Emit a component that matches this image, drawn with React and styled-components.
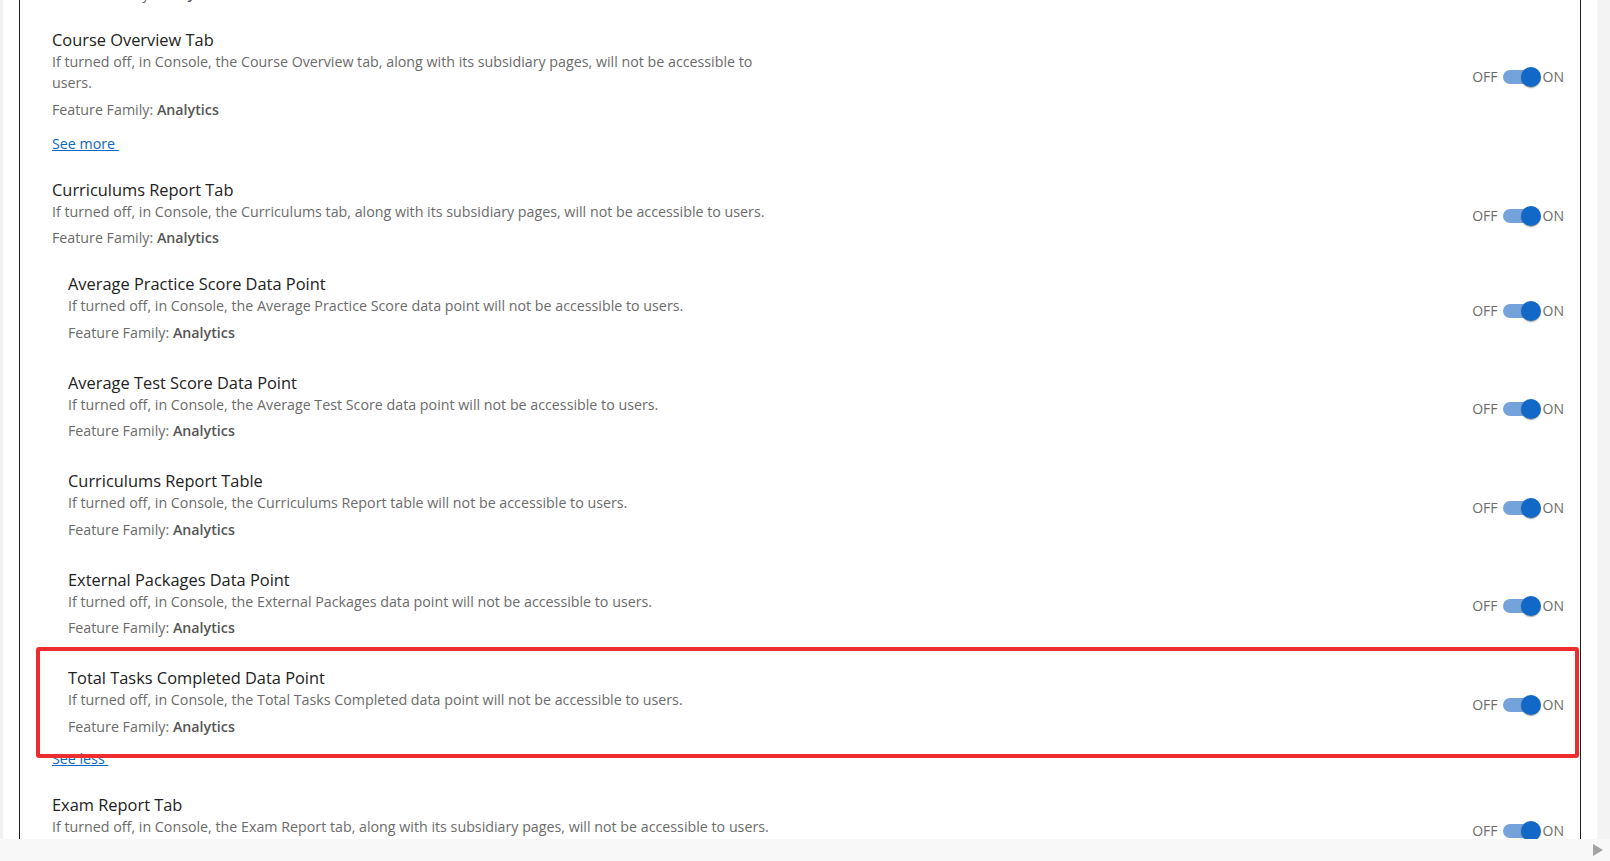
import React from "react";
import styled, { createGlobalStyle } from "styled-components";

const GlobalStyle = createGlobalStyle`
    html, body {
        margin: 0;
        padding: 0;
        background: #ffffff;
        overflow: hidden;
    }
    body {
        font-family: "Open Sans", "Noto Sans", "Liberation Sans", sans-serif;
        color: #222;
    }
`;

const subFeatures = [
    {
        title: "Average Practice Score Data Point",
        desc: "If turned off, in Console, the Average Practice Score data point will not be accessible to users.",
    },
    {
        title: "Average Test Score Data Point",
        desc: "If turned off, in Console, the Average Test Score data point will not be accessible to users.",
    },
    {
        title: "Curriculums Report Table",
        desc: "If turned off, in Console, the Curriculums Report table will not be accessible to users.",
    },
    {
        title: "External Packages Data Point",
        desc: "If turned off, in Console, the External Packages data point will not be accessible to users.",
    },
    {
        title: "Total Tasks Completed Data Point",
        desc: "If turned off, in Console, the Total Tasks Completed data point will not be accessible to users.",
        highlighted: true,
    },
];

export default function App() {
    return (
        <>
            <GlobalStyle />
            <Screen>
                <Viewport>
                    <Gutter />
                    <Panel>
                        <List>
                            <FeatureRow
                                $tail
                                title="Course Catalog Tab"
                                desc="If turned off, in Console, the Course Catalog tab will not be accessible to users."
                            />
                            <FeatureRow
                                title="Course Overview Tab"
                                desc="If turned off, in Console, the Course Overview tab, along with its subsidiary pages, will not be accessible to users."
                            />
                            <SeeLink href="#">See more&nbsp;</SeeLink>

                            <FeatureRow
                                title="Curriculums Report Tab"
                                desc="If turned off, in Console, the Curriculums tab, along with its subsidiary pages, will not be accessible to users."
                            />
                            <SubList>
                                {subFeatures.map((f) => (
                                    <FeatureRow
                                        key={f.title}
                                        $sub
                                        title={f.title}
                                        desc={f.desc}
                                        highlighted={f.highlighted}
                                    />
                                ))}
                            </SubList>
                            <SeeLink href="#">See less&nbsp;</SeeLink>

                            <FeatureRow
                                title="Exam Report Tab"
                                desc="If turned off, in Console, the Exam Report tab, along with its subsidiary pages, will not be accessible to users."
                            />
                        </List>
                    </Panel>
                </Viewport>
                <VScroll />
                <HScroll>
                    <ScrollArrow />
                </HScroll>
            </Screen>
        </>
    );
}

function FeatureRow({ title, desc, $sub, $tail, highlighted }) {
    return (
        <Row $sub={$sub} $tail={$tail}>
            <Info>
                <Title>{title}</Title>
                <Desc>{desc}</Desc>
                <Family>
                    Feature Family: <strong>Analytics</strong>
                </Family>
            </Info>
            <Toggle />
            {highlighted && <Highlight />}
        </Row>
    );
}

function Toggle() {
    return (
        <ToggleWrap>
            <ToggleLabel>OFF</ToggleLabel>
            <Track>
                <Thumb />
            </Track>
            <ToggleLabel>ON</ToggleLabel>
        </ToggleWrap>
    );
}

const Screen = styled.div`
    width: 1610px;
    height: 861px;
    display: grid;
    grid-template-columns: 1fr 13px;
    grid-template-rows: 839px 22px;
`;

const Viewport = styled.div`
    display: flex;
    overflow: hidden;
    padding-right: 16px;
`;

const Gutter = styled.div`
    width: 3px;
    flex-shrink: 0;
    background: #f1f1f1;
    margin-right: 16px;
`;

const Panel = styled.div`
    flex: 1;
    border-left: 1px solid #1f1f1f;
    border-right: 1px solid #1f1f1f;
    padding: 0 16px 0 32px;
    overflow: hidden;
`;

const List = styled.div`
    margin-top: -80px;
    display: flex;
    flex-direction: column;
`;

const SubList = styled.div`
    margin: -4px 0 -2px;
    display: flex;
    flex-direction: column;
`;

const Row = styled.div`
    position: relative;
    display: flex;
    align-items: center;
    justify-content: space-between;
    padding: 14px 0 ${(p) => (p.$tail ? "11px" : "15px")};
    padding-left: ${(p) => (p.$sub ? "16px" : "0")};
`;

const Info = styled.div`
    max-width: 730px;
`;

const Title = styled.div`
    font-size: 16.4px;
    line-height: 22px;
    color: #222;
`;

const Desc = styled.div`
    font-size: 14.25px;
    line-height: 21.5px;
    color: #6b6b6b;
`;

const Family = styled.div`
    margin-top: 5px;
    font-size: 14.25px;
    line-height: 21px;
    color: #6b6b6b;

    strong {
        font-weight: 600;
        color: #555;
    }
`;

const SeeLink = styled.a`
    display: block;
    width: max-content;
    margin: -2px 0 11px;
    font-size: 14.25px;
    line-height: 21px;
    color: #0b66c3;
    text-decoration: underline;
`;

const ToggleWrap = styled.div`
    display: flex;
    align-items: center;
    margin-top: 6px;
    flex-shrink: 0;
`;

const ToggleLabel = styled.span`
    font-size: 14px;
    line-height: 20px;
    color: #6b6b6b;
`;

const Track = styled.div`
    position: relative;
    width: 34px;
    height: 14px;
    border-radius: 7px;
    background: #74a3dc;
    margin: 0 6px 0 5px;
`;

const Thumb = styled.div`
    position: absolute;
    top: -3px;
    left: 18px;
    width: 20px;
    height: 20px;
    border-radius: 50%;
    background: #1168c6;
    box-shadow: 0 2px 1px -1px rgba(0, 0, 0, 0.2), 0 1px 1px 0 rgba(0, 0, 0, 0.14),
        0 1px 3px 0 rgba(0, 0, 0, 0.12);
`;

const Highlight = styled.div`
    position: absolute;
    top: -6px;
    bottom: -6px;
    left: -16px;
    right: -15px;
    border: 4px solid #ee2e2e;
    border-radius: 3px;
    pointer-events: none;
    z-index: 1;
`;

const VScroll = styled.div`
    background: #f3f3f3;
    border-left: 1px solid #f8f8f8;
`;

const HScroll = styled.div`
    grid-column: 1 / span 2;
    background: #f8f8f8;
    display: flex;
    align-items: center;
    justify-content: flex-end;
    padding-right: 7px;
`;

const ScrollArrow = styled.div`
    width: 0;
    height: 0;
    border-top: 6.5px solid transparent;
    border-bottom: 6.5px solid transparent;
    border-left: 10px solid #a3a3a3;
`;
